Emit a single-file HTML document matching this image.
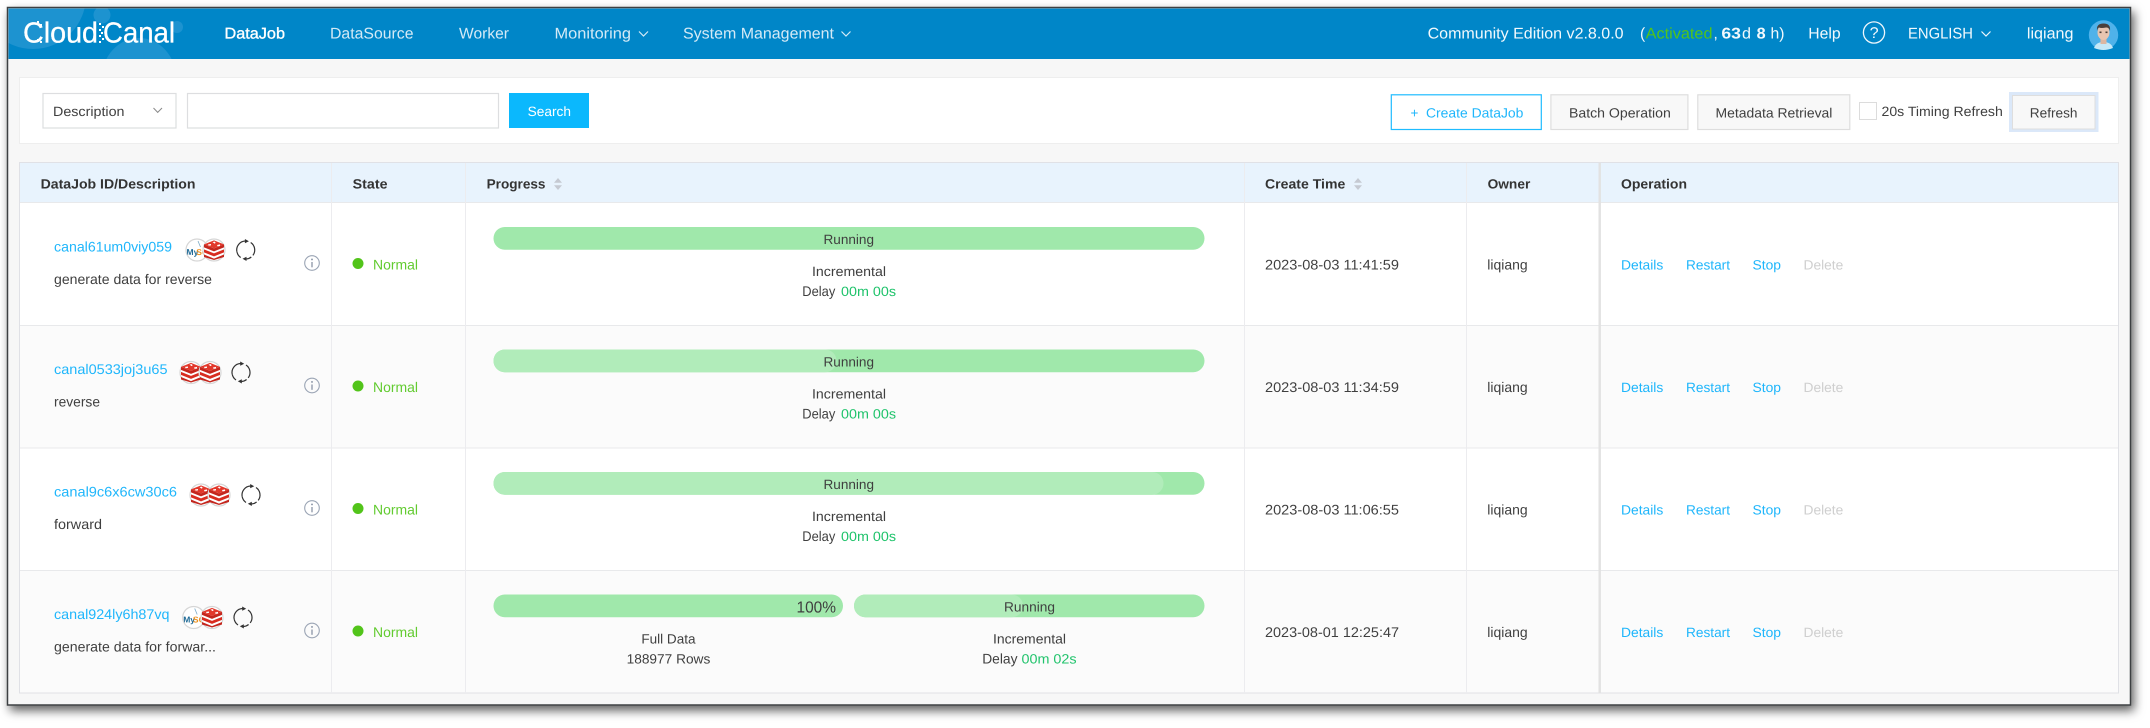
<!DOCTYPE html>
<html lang="en"><head><meta charset="utf-8"><title>CloudCanal</title>
<style>
html,body{margin:0;padding:0;background:#fff;width:2150px;height:728px;overflow:hidden}
svg{display:block;filter:blur(.35px)}
text{font-family:"Liberation Sans",sans-serif;font-size:14px;fill:#3f3f3f;text-rendering:geometricPrecision}
.nav{font-size:15.5px;fill:#d4eaf6}
.w{font-size:15.5px;fill:#f2f9fd}
.h{font-weight:bold;fill:#333}
.l{fill:#1fb6fb}
.g{fill:#1fc36b}
.gn{fill:#62cb30}
.d{fill:#cfcfcf}
.tb{font-size:13.5px}
</style></head><body>
<svg xmlns="http://www.w3.org/2000/svg" width="2150" height="728" viewBox="0 0 2150 728">
<defs>
<filter id="ws" x="-5%" y="-10%" width="110%" height="120%"><feDropShadow dx="3" dy="5" stdDeviation="5" flood-color="#000" flood-opacity=".62"/></filter>
<clipPath id="hc"><rect x="8.5" y="8.5" width="2121" height="50.5"/></clipPath>
<clipPath id="cc"><circle cx="0" cy="0" r="10.5"/></clipPath>
<g id="redis"><circle r="11" fill="#fff" stroke="#d6d6d6" stroke-width="1.2"/>
<path d="M-10 4.5 0 8.6 10 4.5V7L0 10-10 7Z" fill="#c4261d"/>
<path d="M-10 -.6 0 3.4 10 -.6V2.4L0 6.4-10 2.4Z" fill="#d82c20"/>
<path d="M-10 -5.6 0 -1.6 10 -5.6V-2.6L0 1.4-10 -2.6Z" fill="#c4261d"/>
<path d="M-10 -5.6 0 -9.6 10 -5.6 0 -1.6Z" fill="#e2382b"/>
<path d="M-1.5 -8 1 -8.4 1.6 -7 .4 -6.4ZM3 -5 6 -5.6 6 -4 3.6 -3.6ZM-6 -5.6-3 -6-3 -4.6-5.4 -4.2Z" fill="#fff"/></g>
<g id="mysql"><circle r="11" fill="#fff" stroke="#d6d6d6" stroke-width="1.2"/>
<g clip-path="url(#cc)"><text x="-10.5" y="5" style="font-size:8.5px;font-weight:bold;fill:#1f6a96">My</text><text x="-.8" y="5" style="font-size:8.5px;font-weight:bold;fill:#ee9220">SQ</text>
<path d="M1 -9 3.5 -3" stroke="#7aa9c6" fill="none" stroke-width=".8"/></g></g>
<g id="sync" fill="none" stroke="#333" stroke-width="1.2"><path d="M-8.8 1.8A9 9 0 0 1 -.5 -9"/><path d="M5 -7.5A9 9 0 0 1 7.2 5.4"/><path d="M8.8 -1.8A9 9 0 0 1 .5 9" stroke-opacity="0"/><path d="M5.6 7A9 9 0 0 1 .5 9"/><path d="M-5 7.5A9 9 0 0 1 -8.8 1.8"/>
<path d="M-.8 -11 3.2 -8.8-.8 -6.8Z" fill="#333" stroke="none"/><path d="M.8 11-3.2 8.8 .8 6.8Z" fill="#333" stroke="none"/></g>
<g id="info"><circle r="7.3" fill="none" stroke="#9aa4b4" stroke-width="1.1"/><path d="M0 -1V4.3" stroke="#8b95a6" stroke-width="1.3"/><circle cy="-3.6" r=".95" fill="#8b95a6"/></g>
<g id="sort" fill="#c5c9d2"><path d="M-4 -1.2 0 -6 4 -1.2Z"/><path d="M-4 1.2 0 6 4 1.2Z"/></g>
</defs>

<rect x="7.5" y="7.5" width="2123" height="697.5" fill="#f7f7f7" stroke="#3d4043" stroke-width="1.5" filter="url(#ws)"/>

<!-- header -->
<rect x="8.5" y="8.5" width="2121" height="50.5" fill="#0086c8"/>
<g clip-path="url(#hc)" fill="#1d93d0">
<circle cx="33" cy="-4" r="53"/><circle cx="102" cy="15" r="8.5"/><circle cx="177" cy="27" r="6"/><ellipse cx="139" cy="78" rx="37" ry="40"/>
</g>
<text x="23" y="42.5" textLength="75" lengthAdjust="spacingAndGlyphs" style="font-size:29px;fill:#fff;stroke:#fff;stroke-width:.3">Cloud</text>
<text x="103" y="42.5" textLength="72" lengthAdjust="spacingAndGlyphs" style="font-size:29px;fill:#fff;stroke:#fff;stroke-width:.3">Canal</text>
<g fill="#fff"><rect x="99" y="23" width="2" height="2"/><rect x="102" y="26" width="2" height="2"/><rect x="99" y="29" width="2" height="2"/><rect x="101" y="32" width="2" height="2"/><rect x="99" y="35" width="2" height="2"/><rect x="102" y="38" width="2" height="2"/><rect x="99" y="41" width="2" height="2"/><rect x="37" y="21" width="2" height="2"/><rect x="40" y="24" width="2" height="2"/><rect x="37" y="39" width="2" height="2"/><rect x="40" y="41" width="2" height="2"/></g>

<text class="nav" x="224.5" y="38.5" textLength="60.5" lengthAdjust="spacingAndGlyphs" style="fill:#fff;stroke:#fff;stroke-width:.35">DataJob</text>
<text class="nav" x="330" y="38.5" textLength="83.5" lengthAdjust="spacingAndGlyphs">DataSource</text>
<text class="nav" x="459" y="38.5" textLength="50" lengthAdjust="spacingAndGlyphs">Worker</text>
<text class="nav" x="554.5" y="38.5" textLength="76.5" lengthAdjust="spacingAndGlyphs">Monitoring</text>
<path d="M639 31.5 643.5 36 648 31.5" fill="none" stroke="#d4eaf6" stroke-width="1.2"/>
<text class="nav" x="683" y="38.5" textLength="151" lengthAdjust="spacingAndGlyphs">System Management</text>
<path d="M841.5 31.5 846 36 850.5 31.5" fill="none" stroke="#d4eaf6" stroke-width="1.2"/>

<text class="w" x="1427.6" y="38.5" textLength="196" lengthAdjust="spacingAndGlyphs">Community Edition v2.8.0.0</text>
<text class="w" x="1640" y="38.5">(</text>
<text class="w" x="1645.7" y="38.5" textLength="66.8" lengthAdjust="spacingAndGlyphs" style="fill:#52c41a">Activated</text>
<text class="w" x="1713.5" y="38.5">,</text>
<text class="w" x="1721.4" y="38.5" textLength="19.6" lengthAdjust="spacingAndGlyphs" font-weight="bold">63</text>
<text class="w" x="1742" y="38.5" textLength="9" lengthAdjust="spacingAndGlyphs">d</text>
<text class="w" x="1756.7" y="38.5" textLength="9" lengthAdjust="spacingAndGlyphs" font-weight="bold">8</text>
<text class="w" x="1770.5" y="38.5" textLength="14" lengthAdjust="spacingAndGlyphs">h)</text>
<text class="w" x="1808.3" y="38.5" textLength="32.4" lengthAdjust="spacingAndGlyphs">Help</text>
<circle cx="1874" cy="32.5" r="10.6" fill="none" stroke="#eef7fc" stroke-width="1.3"/>
<text class="w" x="1869.6" y="38" textLength="9" lengthAdjust="spacingAndGlyphs">?</text>
<text class="w" x="1908" y="38.5" textLength="65" lengthAdjust="spacingAndGlyphs">ENGLISH</text>
<path d="M1981.5 31.5 1986 36 1990.5 31.5" fill="none" stroke="#eef7fc" stroke-width="1.2"/>
<text class="w" x="2026.9" y="38.5" textLength="46.6" lengthAdjust="spacingAndGlyphs">liqiang</text>
<circle cx="2103.5" cy="35" r="14.7" fill="#4fb2ea"/>
<path d="M2094 48Q2096 42 2103.5 42T2113 48Q2108 50 2103.5 50T2094 48Z" fill="#c5e8f7"/>
<rect x="2100.5" y="38" width="6" height="6" fill="#dcb7a2"/>
<ellipse cx="2103.5" cy="32.5" rx="6" ry="7.5" fill="#e7c5b0"/>
<path d="M2097 31Q2096 23.5 2103.5 23.5T2110 31Q2109 27 2106 27.5 2101 28.5 2099 27.5 2097.5 28 2097 31Z" fill="#4a3f3a"/>
<rect x="2099.5" y="31.5" width="2" height="1.6" fill="#4a3f3a"/><rect x="2105.5" y="31.5" width="2" height="1.6" fill="#4a3f3a"/>

<!-- toolbar card -->
<rect x="19.5" y="77.5" width="2099" height="66" fill="#fff" stroke="#eeeeee"/>
<rect x="43" y="93.5" width="133" height="34.5" fill="#fff" stroke="#dddee0" stroke-width="1.2"/>
<text class="tb" x="53" y="116" textLength="71.5" lengthAdjust="spacingAndGlyphs">Description</text>
<path d="M153.5 108 157.7 112.4 162 108" fill="none" stroke="#8a8a8a"/>
<rect x="187.5" y="93.5" width="311" height="34.5" fill="#fff" stroke="#dddee0" stroke-width="1.2"/>
<rect x="509" y="93" width="80" height="35" fill="#0bb8fd"/>
<text class="tb" x="527.7" y="116" textLength="43.3" lengthAdjust="spacingAndGlyphs" style="fill:#fff">Search</text>

<rect x="1391.3" y="94.8" width="150" height="34.7" fill="#fff" stroke="#1fbcff" stroke-width="1.2"/>
<text class="tb l" x="1410.5" y="117.7">+</text>
<text class="tb l" x="1426" y="117.7" textLength="97.4" lengthAdjust="spacingAndGlyphs">Create DataJob</text>
<rect x="1550.9" y="94.8" width="137" height="34.7" fill="#f8f8f8" stroke="#dedede" stroke-width="1.2"/>
<text class="tb" x="1569" y="117.7" textLength="101.8" lengthAdjust="spacingAndGlyphs">Batch Operation</text>
<rect x="1697.8" y="94.8" width="152" height="34.7" fill="#f8f8f8" stroke="#dedede" stroke-width="1.2"/>
<text class="tb" x="1715.5" y="117.7" textLength="116.9" lengthAdjust="spacingAndGlyphs">Metadata Retrieval</text>
<rect x="1859.5" y="102.5" width="17" height="17" fill="#fff" stroke="#dcdcdc"/>
<text class="tb" x="1881.5" y="116" textLength="121.3" lengthAdjust="spacingAndGlyphs">20s Timing Refresh</text>
<rect x="2010.5" y="93.5" width="86.5" height="37" fill="#f8f8f8" stroke="#dbe8f9" stroke-width="3"/>
<rect x="2012.5" y="95.5" width="82.5" height="33.5" fill="#f8f8f8" stroke="#dedede"/>
<text class="tb" x="2029.8" y="117.7" textLength="47.7" lengthAdjust="spacingAndGlyphs">Refresh</text>

<!-- table -->
<rect x="19.5" y="162.5" width="2099" height="530.5" fill="#fff" stroke="#e0e1e6"/>
<rect x="20" y="163" width="2098" height="39.5" fill="#e8f3fd"/>
<rect x="20" y="325.5" width="2098" height="122.5" fill="#fbfbfb"/>
<rect x="20" y="570.5" width="2098" height="122" fill="#fbfbfb"/>
<g stroke="#e8e9eb" stroke-width="1">
<path d="M20 202.5H2118M20 325.5H2118M20 448H2118M20 570.5H2118"/>
<path d="M331.5 163V693M465.5 163V693M1244.5 163V693M1466.5 163V693" stroke="#ececef"/>
</g>
<rect x="1598.5" y="163" width="2.4" height="530" fill="#e2e2e2"/>

<text class="h tb" x="40.6" y="188.5" textLength="154.9" lengthAdjust="spacingAndGlyphs">DataJob ID/Description</text>
<text class="h tb" x="352.7" y="188.5" textLength="34.8" lengthAdjust="spacingAndGlyphs">State</text>
<text class="h tb" x="486.6" y="188.5" textLength="58.9" lengthAdjust="spacingAndGlyphs">Progress</text>
<use href="#sort" x="558" y="184"/>
<text class="h tb" x="1265" y="188.5" textLength="80.3" lengthAdjust="spacingAndGlyphs">Create Time</text>
<use href="#sort" x="1358" y="184"/>
<text class="h tb" x="1487.6" y="188.5" textLength="42.7" lengthAdjust="spacingAndGlyphs">Owner</text>
<text class="h tb" x="1621" y="188.5" textLength="66" lengthAdjust="spacingAndGlyphs">Operation</text>

<!-- row 1 -->
<text class="l" x="54" y="251.7" textLength="118" lengthAdjust="spacingAndGlyphs">canal61um0viy059</text>
<use href="#mysql" x="197" y="250"/><use href="#redis" x="214" y="250"/><use href="#sync" x="245.7" y="250"/>
<text x="54" y="284" textLength="158" lengthAdjust="spacingAndGlyphs">generate data for reverse</text>
<use href="#info" x="312" y="263"/>
<circle cx="358" cy="263.5" r="5.5" fill="#52c41a"/>
<text class="gn" x="373" y="269.3" textLength="45" lengthAdjust="spacingAndGlyphs">Normal</text>
<rect x="493.5" y="227" width="711" height="22.7" rx="11.3" fill="#a0e8ab"/>
<text class="tb" x="823.5" y="244" textLength="50.5" lengthAdjust="spacingAndGlyphs">Running</text>
<text class="tb" x="812" y="276" textLength="74" lengthAdjust="spacingAndGlyphs">Incremental</text>
<text x="802.3" y="296" textLength="33" lengthAdjust="spacingAndGlyphs">Delay</text>
<text class="tb g" x="841" y="296" textLength="55" lengthAdjust="spacingAndGlyphs">00m 00s</text>
<text x="1265" y="269.3" textLength="134" lengthAdjust="spacingAndGlyphs">2023-08-03 11:41:59</text>
<text x="1487.3" y="269.3" textLength="40.4" lengthAdjust="spacingAndGlyphs">liqiang</text>
<text class="tb l" x="1621" y="269.3" textLength="42.3" lengthAdjust="spacingAndGlyphs">Details</text><text class="tb l" x="1686" y="269.3" textLength="44" lengthAdjust="spacingAndGlyphs">Restart</text><text class="tb l" x="1752.5" y="269.3" textLength="28.5" lengthAdjust="spacingAndGlyphs">Stop</text><text class="tb d" x="1803.5" y="269.3" textLength="39.8" lengthAdjust="spacingAndGlyphs">Delete</text>

<!-- row 2 -->
<g transform="translate(0,122.5)">
<text class="l" x="54" y="251.7" textLength="113.5" lengthAdjust="spacingAndGlyphs">canal0533joj3u65</text>
<use href="#redis" x="191" y="250"/><use href="#redis" x="210" y="250"/><use href="#sync" x="241" y="250"/>
<text x="54" y="284" textLength="46" lengthAdjust="spacingAndGlyphs">reverse</text>
<use href="#info" x="312" y="263"/>
<circle cx="358" cy="263.5" r="5.5" fill="#52c41a"/>
<text class="gn" x="373" y="269.3" textLength="45" lengthAdjust="spacingAndGlyphs">Normal</text>
<rect x="493.5" y="227" width="711" height="22.7" rx="11.3" fill="#a0e8ab"/>
<rect x="493.5" y="227" width="343" height="22.7" rx="11.3" fill="#b1ecba"/>
<text class="tb" x="823.5" y="244" textLength="50.5" lengthAdjust="spacingAndGlyphs">Running</text>
<text class="tb" x="812" y="276" textLength="74" lengthAdjust="spacingAndGlyphs">Incremental</text>
<text x="802.3" y="296" textLength="33" lengthAdjust="spacingAndGlyphs">Delay</text>
<text class="tb g" x="841" y="296" textLength="55" lengthAdjust="spacingAndGlyphs">00m 00s</text>
<text x="1265" y="269.3" textLength="134" lengthAdjust="spacingAndGlyphs">2023-08-03 11:34:59</text>
<text x="1487.3" y="269.3" textLength="40.4" lengthAdjust="spacingAndGlyphs">liqiang</text>
<text class="tb l" x="1621" y="269.3" textLength="42.3" lengthAdjust="spacingAndGlyphs">Details</text><text class="tb l" x="1686" y="269.3" textLength="44" lengthAdjust="spacingAndGlyphs">Restart</text><text class="tb l" x="1752.5" y="269.3" textLength="28.5" lengthAdjust="spacingAndGlyphs">Stop</text><text class="tb d" x="1803.5" y="269.3" textLength="39.8" lengthAdjust="spacingAndGlyphs">Delete</text>
</g>

<!-- row 3 -->
<g transform="translate(0,245)">
<text class="l" x="54" y="251.7" textLength="123" lengthAdjust="spacingAndGlyphs">canal9c6x6cw30c6</text>
<use href="#redis" x="201" y="250"/><use href="#redis" x="219" y="250"/><use href="#sync" x="251" y="250"/>
<text x="54" y="284" textLength="48" lengthAdjust="spacingAndGlyphs">forward</text>
<use href="#info" x="312" y="263"/>
<circle cx="358" cy="263.5" r="5.5" fill="#52c41a"/>
<text class="gn" x="373" y="269.3" textLength="45" lengthAdjust="spacingAndGlyphs">Normal</text>
<rect x="493.5" y="227" width="711" height="22.7" rx="11.3" fill="#a0e8ab"/>
<rect x="493.5" y="227" width="670" height="22.7" rx="11.3" fill="#b1ecba"/>
<text class="tb" x="823.5" y="244" textLength="50.5" lengthAdjust="spacingAndGlyphs">Running</text>
<text class="tb" x="812" y="276" textLength="74" lengthAdjust="spacingAndGlyphs">Incremental</text>
<text x="802.3" y="296" textLength="33" lengthAdjust="spacingAndGlyphs">Delay</text>
<text class="tb g" x="841" y="296" textLength="55" lengthAdjust="spacingAndGlyphs">00m 00s</text>
<text x="1265" y="269.3" textLength="134" lengthAdjust="spacingAndGlyphs">2023-08-03 11:06:55</text>
<text x="1487.3" y="269.3" textLength="40.4" lengthAdjust="spacingAndGlyphs">liqiang</text>
<text class="tb l" x="1621" y="269.3" textLength="42.3" lengthAdjust="spacingAndGlyphs">Details</text><text class="tb l" x="1686" y="269.3" textLength="44" lengthAdjust="spacingAndGlyphs">Restart</text><text class="tb l" x="1752.5" y="269.3" textLength="28.5" lengthAdjust="spacingAndGlyphs">Stop</text><text class="tb d" x="1803.5" y="269.3" textLength="39.8" lengthAdjust="spacingAndGlyphs">Delete</text>
</g>

<!-- row 4 -->
<g transform="translate(0,367.5)">
<text class="l" x="54" y="251.7" textLength="115.5" lengthAdjust="spacingAndGlyphs">canal924ly6h87vq</text>
<use href="#mysql" x="193.7" y="250"/><use href="#redis" x="212" y="250"/><use href="#sync" x="243" y="250"/>
<text x="54" y="284" textLength="162" lengthAdjust="spacingAndGlyphs">generate data for forwar...</text>
<use href="#info" x="312" y="263"/>
<circle cx="358" cy="263.5" r="5.5" fill="#52c41a"/>
<text class="gn" x="373" y="269.3" textLength="45" lengthAdjust="spacingAndGlyphs">Normal</text>
<rect x="493.5" y="227" width="349.5" height="22.7" rx="11.3" fill="#a0e8ab"/>
<text x="796.5" y="245" textLength="39.5" lengthAdjust="spacingAndGlyphs" style="font-size:16px">100%</text>
<rect x="854" y="227" width="350.5" height="22.7" rx="11.3" fill="#a0e8ab"/>
<rect x="854" y="227" width="169" height="22.7" rx="11.3" fill="#b1ecba"/>
<text class="tb" x="1004" y="244" textLength="51" lengthAdjust="spacingAndGlyphs">Running</text>
<text class="tb" x="641.4" y="276" textLength="54.1" lengthAdjust="spacingAndGlyphs">Full Data</text>
<text class="tb" x="626.6" y="296" textLength="83.7" lengthAdjust="spacingAndGlyphs">188977 Rows</text>
<text class="tb" x="993" y="276" textLength="73" lengthAdjust="spacingAndGlyphs">Incremental</text>
<text x="982.2" y="296" textLength="35.3" lengthAdjust="spacingAndGlyphs">Delay</text>
<text class="tb g" x="1021.5" y="296" textLength="55.1" lengthAdjust="spacingAndGlyphs">00m 02s</text>
<text x="1265" y="269.3" textLength="134" lengthAdjust="spacingAndGlyphs">2023-08-01 12:25:47</text>
<text x="1487.3" y="269.3" textLength="40.4" lengthAdjust="spacingAndGlyphs">liqiang</text>
<text class="tb l" x="1621" y="269.3" textLength="42.3" lengthAdjust="spacingAndGlyphs">Details</text><text class="tb l" x="1686" y="269.3" textLength="44" lengthAdjust="spacingAndGlyphs">Restart</text><text class="tb l" x="1752.5" y="269.3" textLength="28.5" lengthAdjust="spacingAndGlyphs">Stop</text><text class="tb d" x="1803.5" y="269.3" textLength="39.8" lengthAdjust="spacingAndGlyphs">Delete</text>
</g>
</svg>
</body></html>
